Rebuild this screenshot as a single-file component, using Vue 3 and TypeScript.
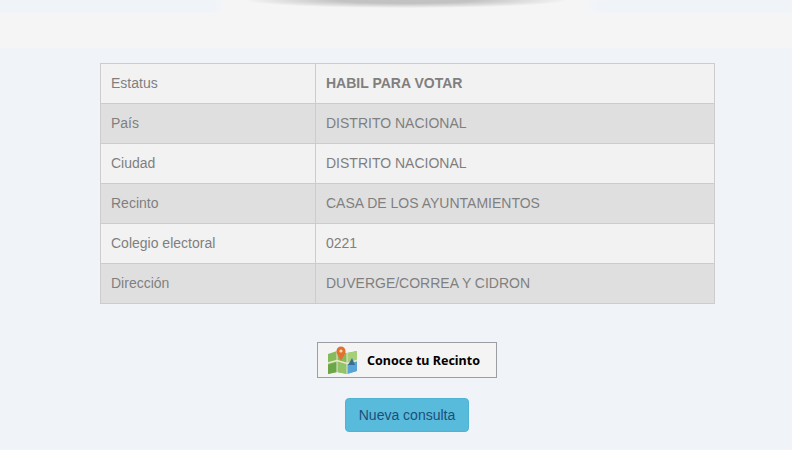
<template>
  <div class="page">
    <div class="banner">
      <div class="banner-top">
        <div class="banner-shadow"></div>
      </div>
    </div>

    <table class="info-table">
      <tbody>
        <tr v-for="row in rows" :key="row.label">
          <td class="label">{{ row.label }}</td>
          <td :class="{ strong: row.strong }">{{ row.value }}</td>
        </tr>
      </tbody>
    </table>

    <a class="map-btn">
      <svg class="map-icon" width="31" height="29" viewBox="0 0 31 29">
        <path d="M1 8 L10 5 L20 7 L30 5 L30 25 L20 28 L10 26 L1 28 Z" fill="#86bb5c" />
        <path d="M20 7 L30 5 L30 15 L20 18 Z" fill="#a6cf7a" />
        <path d="M20 18 L30 15 L30 25 L20 28 Z" fill="#55a5d8" />
        <path d="M1 19 L10 16 L10 26 L1 28 Z" fill="#6ba648" />
        <path d="M10 16 L20 18 L20 28 L10 26 Z" fill="#93c46a" />
        <path d="M1 17 L10 14.5 L20 17.5 L30 14.5" fill="none" stroke="#eceacb" stroke-width="1.5" />
        <path d="M10 5 L10 26 M20 7 L20 28" fill="none" stroke="#e4e7cc" stroke-width="1" />
        <path d="M21 19 L25 12 L28 19 Z" fill="#3d6d8c" />
        <path d="M14 15 C11.5 10 9.5 8 9.5 5 A4.5 4.5 0 0 1 18.5 5 C18.5 8 16.5 10 14 15 Z" fill="#e2702e" />
        <circle cx="14" cy="5" r="1.6" fill="#f6d9b8" />
      </svg>
      <span>Conoce tu Recinto</span>
    </a>

    <button class="new-btn" type="button">Nueva consulta</button>
  </div>
</template>

<script setup lang="ts">
interface Row {
  label: string
  value: string
  strong?: boolean
}

const rows: Row[] = [
  { label: 'Estatus', value: 'HABIL PARA VOTAR', strong: true },
  { label: 'País', value: 'DISTRITO NACIONAL' },
  { label: 'Ciudad', value: 'DISTRITO NACIONAL' },
  { label: 'Recinto', value: 'CASA DE LOS AYUNTAMIENTOS' },
  { label: 'Colegio electoral', value: '0221' },
  { label: 'Dirección', value: 'DUVERGE/CORREA Y CIDRON' }
]
</script>

<style>
html,
body {
  background: #f0f4f9;
}
</style>

<style scoped>
.page {
  height: 450px;
  overflow: hidden;
  background: #f0f4f9;
  font-family: "Liberation Sans", Arial, sans-serif;
  display: flex;
  flex-direction: column;
  align-items: center;
}

/* franja superior con la sombra del encabezado */
.banner {
  width: 100%;
  height: 48px;
  flex-shrink: 0;
  background: linear-gradient(#f0f4f9 12px, #f5f5f5 14px, #f5f5f5 47px, #f0f4f9 49px);
}

.banner-top {
  position: relative;
  width: 384px;
  height: 14px;
  margin-left: 214px;
  overflow: hidden;
  background: linear-gradient(90deg, rgba(245, 245, 245, 0), #f5f5f5 14px, #f5f5f5 370px, rgba(245, 245, 245, 0));
}

.banner-shadow {
  position: absolute;
  top: -8px;
  left: 32px;
  width: 320px;
  height: 16px;
  border-radius: 50%;
  background: radial-gradient(ellipse at center, #c2c2c2 30%, rgba(210, 210, 210, 0.6) 55%, rgba(245, 245, 245, 0) 72%);
}

.info-table {
  width: 615px;
  height: 241px;
  margin: 15px 0 0 23px;
  flex-shrink: 0;
  border-collapse: collapse;
  table-layout: fixed;
  font-size: 14px;
  color: #7f7f7f;
}

.info-table td {
  box-sizing: border-box;
  height: 40px;
  padding: 0 10px 2px;
  border: 1px solid #cccccc;
  background: #f2f2f2;
}

.info-table tr:nth-child(even) td {
  background: #dfdfdf;
}

.info-table .label {
  width: 215px;
}

.info-table .strong {
  font-weight: bold;
}

.map-btn {
  width: 180px;
  height: 36px;
  box-sizing: border-box;
  margin: 38px 0 0 22px;
  display: flex;
  align-items: center;
  flex-shrink: 0;
  padding-left: 9px;
  gap: 9px;
  border: 1px solid #9c9ca4;
  background: #f4f4f4;
  font-family: "Noto Sans", Verdana, sans-serif;
  font-size: 12.5px;
  font-weight: bold;
  color: #000;
}

.new-btn {
  width: 124px;
  height: 34px;
  margin: 20px 0 0 22px;
  flex-shrink: 0;
  border: 1px solid #4fb3d4;
  border-radius: 4px;
  background: #59bbdb;
  font-family: "Liberation Sans", Arial, sans-serif;
  font-size: 14px;
  color: #1a4f7a;
}
</style>
